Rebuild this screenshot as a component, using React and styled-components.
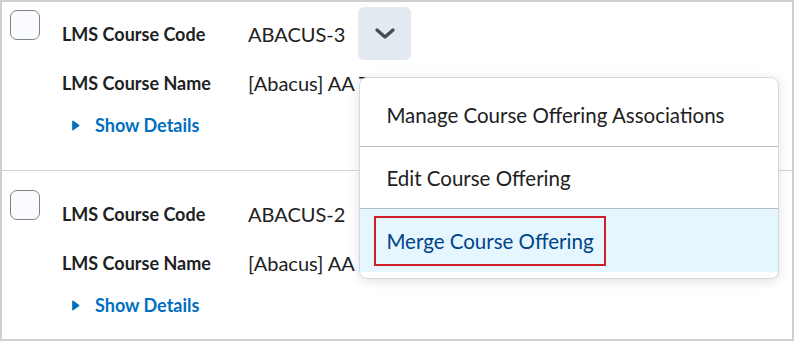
import React from "react";
import styled, { createGlobalStyle } from "styled-components";

const GlobalStyle = createGlobalStyle`
  html, body {
    margin: 0;
    padding: 0;
    background: #ffffff;
  }
  body {
    font-family: Lato, "Noto Sans", sans-serif;
    color: #202122;
  }
`;

const Frame = styled.div`
  position: relative;
  box-sizing: border-box;
  width: 794px;
  height: 341px;
  border: 2px solid #cfcfcf;
  overflow: hidden;
  background: #fff;
`;

const Row = styled.div`
  display: flex;
  align-items: flex-start;
  gap: 22px;
  padding: ${(p) => p.$padTop}px 0 0 8px;
  height: ${(p) => p.$height}px;
  box-sizing: border-box;
  border-bottom: ${(p) => (p.$divider ? "1px solid #cdd5dc" : "none")};
`;

const Checkbox = styled.span`
  flex: none;
  width: 30px;
  height: 30px;
  margin-top: 3px;
  box-sizing: border-box;
  border: 1.5px solid #7c8287;
  border-radius: 7px;
  background: #f9fbff;
`;

const Details = styled.div`
  display: flex;
  flex-direction: column;
`;

const Field = styled.div`
  display: flex;
  align-items: center;
  height: ${(p) => p.$h}px;
`;

const Label = styled.span`
  width: 186px;
  font-size: 18px;
  font-weight: 700;
  color: #202122;
`;

const Value = styled.span`
  font-size: 20px;
  color: #202122;
  white-space: nowrap;
`;

const MenuAnchor = styled.div`
  position: relative;
  margin-left: 13px;
`;

const DropButton = styled.button`
  width: 53px;
  height: 53px;
  border: none;
  border-radius: 6px;
  background: #e3e9f1;
  display: flex;
  align-items: center;
  justify-content: center;
  padding: 0;
`;

const ShowDetails = styled.a`
  display: flex;
  align-items: center;
  gap: 15px;
  margin-left: 10px;
  font-size: 18px;
  font-weight: 700;
  color: #006fbf;
  text-decoration: none;
`;

const Menu = styled.div`
  position: absolute;
  left: 1px;
  top: 70px;
  width: 420px;
  box-sizing: border-box;
  padding: 6px 0;
  background: #fff;
  border: 1px solid #d3d9e3;
  border-radius: 8px;
  box-shadow: 0 2px 12px rgba(0, 0, 0, 0.12);
  z-index: 5;
`;

const MenuItem = styled.div`
  display: flex;
  align-items: center;
  height: ${(p) => p.$h}px;
  padding-left: ${(p) => (p.$focused ? 14 : 26)}px;
  font-size: 20.5px;
  color: ${(p) => (p.$active ? "#004489" : "#202122")};
  background: ${(p) => (p.$active ? "#e6f6fe" : "transparent")};
  border-bottom: ${(p) => (p.$divider ? "1px solid #b7bcc2" : "none")};
`;

const FocusRing = styled.span`
  display: inline-flex;
  align-items: center;
  height: 50px;
  box-sizing: border-box;
  padding: 0 10px;
  border: 2px solid #cd2026;
`;

const Chevron = () => (
  <svg width="22" height="14" viewBox="0 0 22 14">
    <polyline
      points="3,3 11,10 19,3"
      fill="none"
      stroke="#494c4e"
      strokeWidth="3.4"
      strokeLinecap="round"
      strokeLinejoin="round"
    />
  </svg>
);

const Caret = () => (
  <svg width="8" height="11" viewBox="0 0 8 11">
    <path d="M0.9 1.2 L6.8 5.5 L0.9 9.8 Z" fill="#006fbf" stroke="#006fbf" strokeWidth="1.4" strokeLinejoin="round" />
  </svg>
);

const CourseRow = ({ code, name, padTop, height, divider, withMenu }) => (
  <Row $padTop={padTop} $height={height} $divider={divider}>
    <Checkbox />
    <Details>
      <Field $h={53}>
        <Label>LMS Course Code</Label>
        <Value>{code}</Value>
        {withMenu && (
          <MenuAnchor>
            <DropButton>
              <Chevron />
            </DropButton>
            <Menu>
              <MenuItem $h={62} $divider>
                Manage Course Offering Associations
              </MenuItem>
              <MenuItem $h={61} $divider>
                Edit Course Offering
              </MenuItem>
              <MenuItem $h={63} $active $focused>
                <FocusRing>Merge Course Offering</FocusRing>
              </MenuItem>
            </Menu>
          </MenuAnchor>
        )}
      </Field>
      <Field $h={46}>
        <Label>LMS Course Name</Label>
        <Value>{name}</Value>
      </Field>
      <Field $h={38}>
        <ShowDetails href="#">
          <Caret />
          Show Details
        </ShowDetails>
      </Field>
    </Details>
  </Row>
);

export default function App() {
  return (
    <>
      <GlobalStyle />
      <Frame>
        <CourseRow
          code="ABACUS-3"
          name="[Abacus] AA Test Course Connector Jordan"
          padTop={5}
          height={169}
          divider
          withMenu
        />
        <CourseRow
          code="ABACUS-2"
          name="[Abacus] AA Test Course Connector Jordan"
          padTop={16}
          height={170}
        />
      </Frame>
    </>
  );
}
